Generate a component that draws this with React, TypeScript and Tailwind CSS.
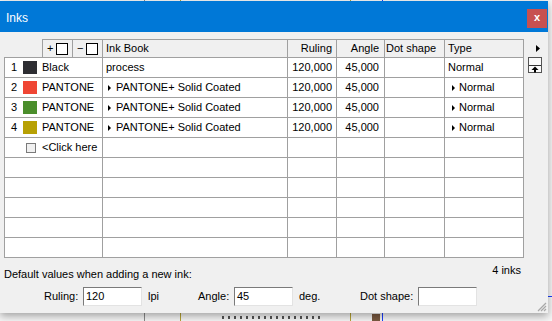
import React from "react";

type Row = {
  n: number;
  color: string;
  name: string;
  book: string;
  sub: boolean;
};

const rows: Row[] = [
  { n: 1, color: "#2e2e33", name: "Black", book: "process", sub: false },
  { n: 2, color: "#ef4634", name: "PANTONE", book: "PANTONE+ Solid Coated", sub: true },
  { n: 3, color: "#4b8e2c", name: "PANTONE", book: "PANTONE+ Solid Coated", sub: true },
  { n: 4, color: "#b7a004", name: "PANTONE", book: "PANTONE+ Solid Coated", sub: true },
];

function Tri() {
  return (
    <svg width="3" height="6" viewBox="0 0 3 6" className="shrink-0">
      <path d="M0 0L3 3L0 6Z" fill="#000" />
    </svg>
  );
}

function BoxIcon({ sign }: { sign: string }) {
  return (
    <div className="flex items-center h-full pl-[4px] gap-[3px]">
      <span className="w-[6px] text-center leading-none">{sign}</span>
      <div className="w-[12px] h-[12px] border border-black bg-white" />
    </div>
  );
}

function ToTopIcon() {
  return (
    <svg width="14" height="16" viewBox="0 0 14 16">
      <rect x="0.5" y="0.5" width="13" height="15" fill="#fafafa" stroke="#555" />
      <line x1="1" y1="8.5" x2="13" y2="8.5" stroke="#333" />
      <path d="M7 9.5L3.5 13H10.5Z" fill="#000" />
      <rect x="6" y="12" width="2" height="3.5" fill="#000" />
    </svg>
  );
}

function Grip() {
  return (
    <svg width="11" height="11" viewBox="0 0 11 11">
      <path d="M10 2L2 10M10 5L5 10M10 8L8 10" stroke="#a8a8a8" strokeWidth="1.2" />
    </svg>
  );
}

function DataRow({ row }: { row?: Row }) {
  return (
    <div className="flex h-[20px] border-b border-[#a0a0a0]">
      <div className="w-[98px] border-r border-[#a0a0a0] flex items-center">
        {row && (
          <>
            <span className="w-[18px] pl-[6px]">{row.n}</span>
            <div className="w-[14px] h-[13px]" style={{ backgroundColor: row.color }} />
            <span className="pl-[5px]">{row.name}</span>
          </>
        )}
      </div>
      <div className="w-[185px] border-r border-[#a0a0a0] flex items-center">
        {row &&
          (row.sub ? (
            <div className="flex items-center pl-[5px] gap-[5px]">
              <Tri />
              <span>{row.book}</span>
            </div>
          ) : (
            <span className="pl-[3px]">{row.book}</span>
          ))}
      </div>
      <div className="w-[49px] border-r border-[#a0a0a0] flex items-center justify-end pr-[4px]">
        {row && "120,000"}
      </div>
      <div className="w-[48px] border-r border-[#a0a0a0] flex items-center justify-end pr-[5px]">
        {row && "45,000"}
      </div>
      <div className="w-[60px] border-r border-[#a0a0a0]" />
      <div className="w-[79px] border-r border-[#a0a0a0] flex items-center">
        {row &&
          (row.sub ? (
            <div className="flex items-center pl-[7px] gap-[4px]">
              <Tri />
              <span>Normal</span>
            </div>
          ) : (
            <span className="pl-[3px]">Normal</span>
          ))}
      </div>
    </div>
  );
}

function ClickRow() {
  return (
    <div className="flex h-[20px] border-b border-[#a0a0a0]">
      <div className="w-[98px] border-r border-[#a0a0a0] flex items-center">
        <div className="ml-[21px] w-[10px] h-[10px] border border-[#7a7a7a] bg-[#f0f0f0]" />
        <span className="pl-[6px]">&lt;Click here</span>
      </div>
      <div className="w-[185px] border-r border-[#a0a0a0]" />
      <div className="w-[49px] border-r border-[#a0a0a0]" />
      <div className="w-[48px] border-r border-[#a0a0a0]" />
      <div className="w-[60px] border-r border-[#a0a0a0]" />
      <div className="w-[79px] border-r border-[#a0a0a0]" />
    </div>
  );
}

function Field({ value }: { value: string }) {
  return (
    <div className="w-[59px] h-[19px] bg-white border border-t-[#7a7a7a] border-l-[#7a7a7a] border-r-[#e3e3e3] border-b-[#e3e3e3] flex items-center pl-[2px]">
      {value}
    </div>
  );
}

export default function App() {
  const hcell = "h-[18px] border-t border-r border-[#a0a0a0] flex items-center";
  return (
    <div className="relative w-[552px] h-[321px] bg-[#f6f6f6] overflow-hidden font-['Liberation_Sans',Arial,sans-serif] text-[11px] text-black">
      {/* desktop bits showing behind the dialog */}
      <div className="absolute left-[144px] top-0 w-px h-[321px] bg-[#8a8a8a]" />
      <div className="absolute left-[180px] top-0 w-px h-[321px] bg-[#b5a233]" />
      <div className="absolute left-[350px] top-0 w-px h-[321px] bg-[#b5a233]" />
      <div className="absolute left-[372px] top-[314px] w-[8px] h-[7px] bg-[#7a5a40]" />
      <div className="absolute left-[382px] top-0 w-px h-[321px] bg-[#1a3cff]" />
      <div className="absolute left-[222px] top-[316px] w-[100px] h-[3px] bg-[repeating-linear-gradient(90deg,#555_0_2px,transparent_2px_6px)]" />
      <div className="absolute left-[548px] top-[296px] w-[4px] h-px bg-[#1a3cff]" />

      <div className="relative mt-[1px] w-[548px] h-[312px] flex flex-col shadow-[0_3px_8px_rgba(0,0,0,0.35)]">
        <div className="h-[31px] bg-[#0078d7] flex items-start justify-between shrink-0">
          <span className="text-white text-[12px] pl-[6px] pt-[8px]">Inks</span>
          <div className="mt-[8px] mr-[1px] w-[20px] h-[19px] bg-[#c75050] flex items-center justify-center text-white text-[11px] font-bold leading-none pb-[2px]">
            x
          </div>
        </div>
        <div className="flex-1 bg-[#f0f0f0] flex flex-col pl-[4px] pt-[7px] relative">
          <div className="flex">
            <div className="w-[520px]">
              <div className="flex">
                <div className="w-[38px]" />
                <div className={`w-[31px] border-l ${hcell}`}>
                  <BoxIcon sign="+" />
                </div>
                <div className={`w-[30px] ${hcell}`}>
                  <BoxIcon sign="−" />
                </div>
                <div className={`w-[185px] pl-[3px] ${hcell}`}>Ink Book</div>
                <div className={`w-[49px] justify-end pr-[4px] ${hcell}`}>Ruling</div>
                <div className={`w-[48px] justify-end pr-[5px] ${hcell}`}>Angle</div>
                <div className={`w-[60px] pl-[1px] ${hcell}`}>Dot shape</div>
                <div className={`w-[79px] pl-[3px] ${hcell}`}>Type</div>
              </div>
              <div className="border-l border-t border-[#a0a0a0] bg-white">
                {rows.map((r) => (
                  <DataRow key={r.n} row={r} />
                ))}
                <ClickRow />
                <DataRow />
                <DataRow />
                <DataRow />
                <DataRow />
                <DataRow />
              </div>
            </div>
            <div className="ml-[4px] w-[14px] flex flex-col">
              <div className="h-[18px] flex items-center pl-[8px]">
                <svg width="4" height="7" viewBox="0 0 4 7">
                  <path d="M0 0L4 3.5L0 7Z" fill="#000" />
                </svg>
              </div>
              <ToTopIcon />
            </div>
          </div>
          <div className="flex justify-between w-[520px] leading-[14px]">
            <span className="mt-[9px]">Default values when adding a new ink:</span>
            <span className="mt-[5px] pr-[3px]">4 inks</span>
          </div>
          <div className="flex items-center mt-[6px]">
            <span className="w-[79px] pl-[40px]">Ruling:</span>
            <Field value="120" />
            <span className="w-[56px] pl-[6px]">lpi</span>
            <span className="w-[36px]">Angle:</span>
            <Field value="45" />
            <span className="w-[67px] pl-[6px]">deg.</span>
            <span className="w-[58px]">Dot shape:</span>
            <Field value="" />
          </div>
          <div className="absolute right-[1px] bottom-[1px]">
            <Grip />
          </div>
        </div>
      </div>
    </div>
  );
}
